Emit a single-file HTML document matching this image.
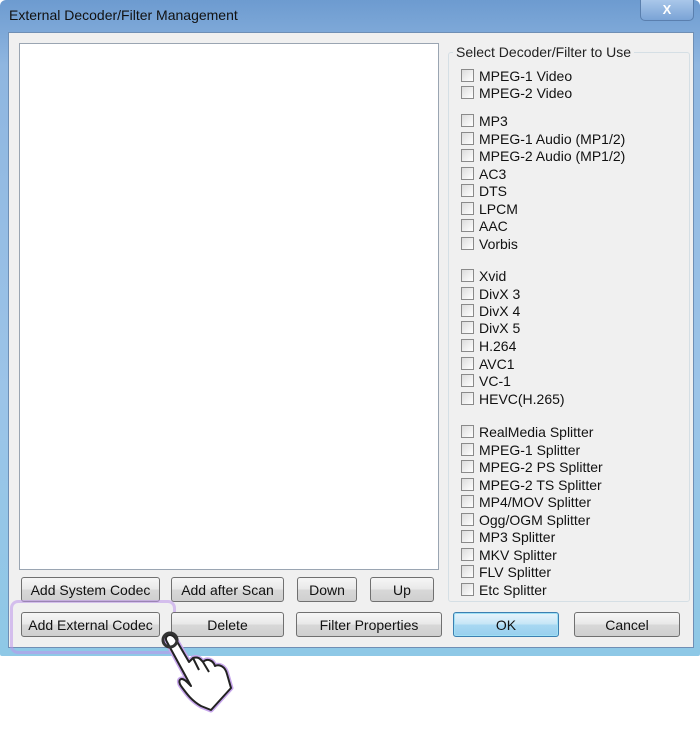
<!DOCTYPE html><html><head><style>
body{margin:0;width:700px;height:736px;background:#fff;position:relative;overflow:hidden;font-family:"Liberation Sans",sans-serif;}
.frame{position:absolute;left:0;top:0;width:700px;height:656px;background:linear-gradient(180deg,#6d9bd0 0%,#8fb6e0 10%,#9cc4e8 60%,#8ec8e6 100%);border-radius:6px 6px 2px 2px;}
.title{position:absolute;left:9px;top:7px;font-size:14px;color:#111;}
.close{position:absolute;left:640px;top:0;width:52px;height:20px;border:1px solid #5a7fae;border-top:none;border-radius:0 0 5px 5px;background:linear-gradient(#a9c7ea,#7aa3d6);color:#fff;font-weight:bold;font-size:13px;text-align:center;line-height:19px;}
.client{position:absolute;left:8px;top:32px;width:684px;height:614px;background:#f0f0f0;border:1px solid #6f8fb5;}
.list{position:absolute;left:19px;top:43px;width:418px;height:525px;background:#fff;border:1px solid #9aa5b2;}
.group{position:absolute;left:448px;top:52px;width:240px;height:548px;border:1px solid #d5dfe5;border-radius:3px;}
.glabel{position:absolute;left:453px;top:44px;background:#f0f0f0;padding:0 3px;font-size:14px;color:#222;}
.cb{position:absolute;left:461px;font-size:14px;color:#111;white-space:nowrap;}
.cb:before{content:"";display:inline-block;width:11px;height:11px;border:1px solid #8a8a8a;background:linear-gradient(135deg,#dcdcdc,#fff);vertical-align:-1px;margin-right:5px;}
.btn{position:absolute;height:25px;border:1px solid #707070;border-radius:3px;background:linear-gradient(#f6f6f6 0%,#e8e8e8 50%,#d8d8d8 51%,#cfcfcf 100%);font-size:14px;color:#111;text-align:center;line-height:25px;box-sizing:border-box;}
.ok{border-color:#3c7fb1;background:linear-gradient(#e8f4fc 0%,#c4e5f6 50%,#a8d8f2 51%,#98cfee 100%);box-shadow:0 0 0 1px #9fe0f5 inset;}
.hl{position:absolute;left:10px;top:600px;width:160px;height:48px;border:3px solid rgba(190,150,235,.55);border-radius:8px;}
</style></head><body>
<div class="frame"></div>
<div class="title">External Decoder/Filter Management</div>
<div class="close">X</div>
<div class="client"></div>
<div class="list"></div>
<div class="group"></div>
<div class="glabel">Select Decoder/Filter to Use</div>
<div class="cb" style="top:68px">MPEG-1 Video</div>
<div class="cb" style="top:85px">MPEG-2 Video</div>
<div class="cb" style="top:113px">MP3</div>
<div class="cb" style="top:131px">MPEG-1 Audio (MP1/2)</div>
<div class="cb" style="top:148px">MPEG-2 Audio (MP1/2)</div>
<div class="cb" style="top:166px">AC3</div>
<div class="cb" style="top:183px">DTS</div>
<div class="cb" style="top:201px">LPCM</div>
<div class="cb" style="top:218px">AAC</div>
<div class="cb" style="top:236px">Vorbis</div>
<div class="cb" style="top:268px">Xvid</div>
<div class="cb" style="top:286px">DivX 3</div>
<div class="cb" style="top:303px">DivX 4</div>
<div class="cb" style="top:320px">DivX 5</div>
<div class="cb" style="top:338px">H.264</div>
<div class="cb" style="top:356px">AVC1</div>
<div class="cb" style="top:373px">VC-1</div>
<div class="cb" style="top:391px">HEVC(H.265)</div>
<div class="cb" style="top:424px">RealMedia Splitter</div>
<div class="cb" style="top:442px">MPEG-1 Splitter</div>
<div class="cb" style="top:459px">MPEG-2 PS Splitter</div>
<div class="cb" style="top:477px">MPEG-2 TS Splitter</div>
<div class="cb" style="top:494px">MP4/MOV Splitter</div>
<div class="cb" style="top:512px">Ogg/OGM Splitter</div>
<div class="cb" style="top:529px">MP3 Splitter</div>
<div class="cb" style="top:547px">MKV Splitter</div>
<div class="cb" style="top:564px">FLV Splitter</div>
<div class="cb" style="top:582px">Etc Splitter</div>
<div class="btn" style="left:21px;top:577px;width:139px">Add System Codec</div>
<div class="btn" style="left:171px;top:577px;width:113px">Add after Scan</div>
<div class="btn" style="left:297px;top:577px;width:60px">Down</div>
<div class="btn" style="left:370px;top:577px;width:64px">Up</div>
<div class="hl"></div>
<div class="btn" style="left:21px;top:612px;width:139px">Add External Codec</div>
<div class="btn" style="left:171px;top:612px;width:113px">Delete</div>
<div class="btn" style="left:296px;top:612px;width:146px">Filter Properties</div>
<div class="btn ok" style="left:453px;top:612px;width:106px">OK</div>
<div class="btn" style="left:574px;top:612px;width:106px">Cancel</div>
<svg style="position:absolute;left:155px;top:630px" width="90" height="85" viewBox="0 0 90 85">
<path d="M12 12 C8 6 16 2 20 8 L34 32 L38 28 C44 26 46 30 48 32 C52 28 58 30 60 36 C64 34 70 36 72 44 L76 58 L56 80 L46 76 C36 70 32 64 26 56 C22 50 26 46 32 52 L36 56 Z" fill="#fff" stroke="#c7a6ec" stroke-width="5" stroke-linejoin="round"/>
<path d="M12 12 C8 6 16 2 20 8 L34 32 L38 28 C44 26 46 30 48 32 C52 28 58 30 60 36 C64 34 70 36 72 44 L76 58 L56 80 L46 76 C36 70 32 64 26 56 C22 50 26 46 32 52 L36 56 Z M38 28 L44 40 M48 32 L54 42" fill="#fff" stroke="#222" stroke-width="2" stroke-linejoin="round"/>
<circle cx="15" cy="10" r="7" fill="none" stroke="#333" stroke-width="3"/>
</svg>
</body></html>
